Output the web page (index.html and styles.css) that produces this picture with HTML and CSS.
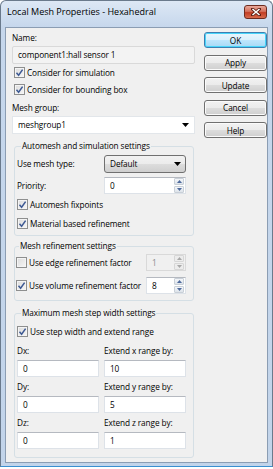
FILE: index.html
```html
<!DOCTYPE html>
<html lang="en">
<head>
    <meta charset="UTF-8">
    <title>Local Mesh Properties - Hexahedral</title>
    <link rel="stylesheet" href="styles.css">
</head>
<body>

<div class="window">
    <div class="titlebar">
        <span class="title">Local Mesh Properties - Hexahedral</span>
        <span class="close-btn">
            <svg width="10" height="8" viewBox="0 0 10 8"><path d="M1.5 1 L8.5 7 M8.5 1 L1.5 7" stroke="#5a1d12" stroke-width="3" stroke-linecap="square"/><path d="M1.5 1 L8.5 7 M8.5 1 L1.5 7" stroke="#fff" stroke-width="1.6"/></svg>
        </span>
    </div>

    <div class="client">
        <div class="main">
            <div class="label">Name:</div>
            <div class="textbox readonly">component1:hall sensor 1</div>

            <div class="check">
                <span class="box"><svg width="9" height="9" viewBox="0 0 9 9"><path d="M1.5 4.8 L3.6 7.2 L7.6 1.6" fill="none" stroke="#3d5993" stroke-width="1.5"/></svg></span>
                Consider for simulation
            </div>
            <div class="check">
                <span class="box"><svg width="9" height="9" viewBox="0 0 9 9"><path d="M1.5 4.8 L3.6 7.2 L7.6 1.6" fill="none" stroke="#3d5993" stroke-width="1.5"/></svg></span>
                Consider for bounding box
            </div>

            <div class="label label-gap">Mesh group:</div>
            <div class="combo">
                <span>meshgroup1</span>
                <svg width="7" height="4" viewBox="0 0 7 4"><path d="M0 0 H7 L3.5 4 Z" fill="#000"/></svg>
            </div>

            <fieldset class="group group-first">
                <legend>Automesh and simulation settings</legend>
                <div class="row">
                    <span>Use mesh type:</span>
                    <div class="dropdown">
                        <span>Default</span>
                        <svg width="7" height="4" viewBox="0 0 7 4"><path d="M0 0 H7 L3.5 4 Z" fill="#000"/></svg>
                    </div>
                </div>
                <div class="row row-gap">
                    <span>Priority:</span>
                    <div class="spin spin-wide">
                        <span class="spin-value">0</span>
                        <span class="spin-btns">
                            <span class="arrow"><svg width="5" height="3" viewBox="0 0 5 3"><path d="M0 3 H5 L2.5 0 Z" fill="#4e6a9c"/></svg></span>
                            <span class="arrow"><svg width="5" height="3" viewBox="0 0 5 3"><path d="M0 0 H5 L2.5 3 Z" fill="#4e6a9c"/></svg></span>
                        </span>
                    </div>
                </div>
                <div class="check check-in">
                    <span class="box"><svg width="9" height="9" viewBox="0 0 9 9"><path d="M1.5 4.8 L3.6 7.2 L7.6 1.6" fill="none" stroke="#3d5993" stroke-width="1.5"/></svg></span>
                    Automesh fixpoints
                </div>
                <div class="check check-in">
                    <span class="box"><svg width="9" height="9" viewBox="0 0 9 9"><path d="M1.5 4.8 L3.6 7.2 L7.6 1.6" fill="none" stroke="#3d5993" stroke-width="1.5"/></svg></span>
                    Material based refinement
                </div>
            </fieldset>

            <fieldset class="group group-refine">
                <legend>Mesh refinement settings</legend>
                <div class="row">
                    <div class="check">
                        <span class="box"></span>
                        Use edge refinement factor
                    </div>
                    <div class="spin spin-small disabled">
                        <span class="spin-value">1</span>
                        <span class="spin-btns">
                            <span class="arrow"><svg width="5" height="3" viewBox="0 0 5 3"><path d="M0 3 H5 L2.5 0 Z" fill="#a8a8a8"/></svg></span>
                            <span class="arrow"><svg width="5" height="3" viewBox="0 0 5 3"><path d="M0 0 H5 L2.5 3 Z" fill="#a8a8a8"/></svg></span>
                        </span>
                    </div>
                </div>
                <div class="row row-gap2">
                    <div class="check">
                        <span class="box"><svg width="9" height="9" viewBox="0 0 9 9"><path d="M1.5 4.8 L3.6 7.2 L7.6 1.6" fill="none" stroke="#3d5993" stroke-width="1.5"/></svg></span>
                        Use volume refinement factor
                    </div>
                    <div class="spin spin-small">
                        <span class="spin-value">8</span>
                        <span class="spin-btns">
                            <span class="arrow"><svg width="5" height="3" viewBox="0 0 5 3"><path d="M0 3 H5 L2.5 0 Z" fill="#4e6a9c"/></svg></span>
                            <span class="arrow"><svg width="5" height="3" viewBox="0 0 5 3"><path d="M0 0 H5 L2.5 3 Z" fill="#4e6a9c"/></svg></span>
                        </span>
                    </div>
                </div>
            </fieldset>

            <fieldset class="group group-step">
                <legend>Maximum mesh step width settings</legend>
                <div class="check check-in">
                    <span class="box"><svg width="9" height="9" viewBox="0 0 9 9"><path d="M1.5 4.8 L3.6 7.2 L7.6 1.6" fill="none" stroke="#3d5993" stroke-width="1.5"/></svg></span>
                    Use step width and extend range
                </div>
                <div class="pairs">
                    <span class="label">Dx:</span>
                    <span class="label">Extend x range by:</span>
                    <div class="textbox">0</div>
                    <div class="textbox">10</div>

                    <span class="label">Dy:</span>
                    <span class="label">Extend y range by:</span>
                    <div class="textbox">0</div>
                    <div class="textbox">5</div>

                    <span class="label">Dz:</span>
                    <span class="label">Extend z range by:</span>
                    <div class="textbox">0</div>
                    <div class="textbox">1</div>
                </div>
            </fieldset>
        </div>

        <div class="buttons">
            <button class="btn btn-default">OK</button>
            <button class="btn">Apply</button>
            <button class="btn">Update</button>
            <button class="btn">Cancel</button>
            <button class="btn">Help</button>
        </div>
    </div>
</div>

</body>
</html>
```

FILE: styles.css
```css
* {
    box-sizing: border-box;
}

body {
    margin: 0;
    background: #ffffff;
    color: #000;
    font-family: 'Open Sans', 'Noto Sans', sans-serif;
    font-size: 8.25px;
    line-height: 12px;
    letter-spacing: -0.1px;
}

.window {
    width: 273px;
    height: 467px;
    background: linear-gradient(#dde8f5, #c6d7ec 26px, #c2d4ea);
    border: 1px solid #6a7a8c;
    border-bottom-color: #3a8fd0;
    border-radius: 6px 6px 0 0;
    padding: 0 4px 3px;
    display: flex;
    flex-direction: column;
}

/* title bar */

.titlebar {
    height: 26px;
    display: flex;
    align-items: flex-start;
    justify-content: space-between;
    padding: 5px 1px 0 2px;
}

.title {
    font-size: 9px;
    line-height: 12px;
    letter-spacing: 0;
}

.close-btn {
    width: 23px;
    height: 14px;
    margin-top: -1px;
    display: flex;
    align-items: center;
    justify-content: center;
    border: 1px solid #6e2c20;
    border-radius: 3px;
    background: linear-gradient(#e9a99a, #d4705c 45%, #c23e25 55%, #d86a4c);
}

/* client area */

.client {
    flex: 1;
    background: #f0f0f0;
    border: 1px solid #8b9db3;
    display: flex;
    padding: 4px 0 0 6px;
}

.main {
    width: 183px;
}

.buttons {
    width: 63px;
    margin-left: 9px;
    display: flex;
    flex-direction: column;
    gap: 6.5px;
}

.label {
    display: block;
    height: 12px;
    white-space: nowrap;
}

.label-gap {
    margin-top: 4px;
}

.textbox {
    height: 18px;
    margin-top: 2px;
    padding: 0 0 0 5px;
    background: #fff;
    border: 1px solid #dde2e8;
    border-top-color: #b5b9c0;
    display: flex;
    align-items: center;
}

.textbox.readonly {
    background: #f3f3f3;
    border: 1px solid #d9d9d9;
    border-radius: 2px;
}

/* check boxes */

.check {
    height: 17px;
    display: flex;
    align-items: center;
    padding-left: 2px;
    white-space: nowrap;
    flex-shrink: 0;
}

.check-in {
    padding-left: 0;
    margin-top: 2px;
}

.box {
    width: 11px;
    height: 11px;
    margin-right: 2px;
    border: 1px solid #8e8f8f;
    background: linear-gradient(135deg, #dcdcdc, #f6f6f6);
    box-shadow: inset 0 0 0 1px #f4f4f4;
    display: flex;
    align-items: center;
    justify-content: center;
}

/* combos */

.combo {
    height: 18px;
    margin-top: 2px;
    padding: 0 5px;
    background: #fff;
    border: 1px solid #e2e6ea;
    display: flex;
    align-items: center;
    justify-content: space-between;
}

.dropdown {
    width: 82px;
    height: 18px;
    padding: 0 4px 0 5px;
    border: 1px solid #707070;
    border-radius: 3px;
    background: linear-gradient(#f2f2f2, #ebebeb 50%, #dddddd 50%, #cfcfcf);
    display: flex;
    align-items: center;
    justify-content: space-between;
}

/* group boxes */

.group {
    margin: 6px 1px 0 2px;
    padding: 3px 7px 3px 2px;
    border: 1px solid #d5dfe5;
    border-radius: 3px;
}

.group legend {
    padding: 0 1px;
    margin-left: 4px;
    line-height: 12px;
}

.group-refine {
    margin-top: 4px;
    padding: 2px 7px 6px 0;
}

.group-refine .check {
    padding-left: 1px;
}

.group-step {
    margin-top: 6px;
    padding: 2px 7px 6px 2px;
}

.row {
    display: flex;
    align-items: center;
    justify-content: space-between;
    height: 18px;
}

.group-refine .row {
    height: 17px;
}

.row-gap {
    margin-top: 4px;
    height: 17px;
}

.row-gap2 {
    margin-top: 6px;
}

/* spin boxes */

.spin {
    height: 17px;
    background: #fff;
    border: 1px solid #dde2e8;
    border-top-color: #b5b9c0;
    display: flex;
    align-items: center;
    justify-content: space-between;
    padding-left: 5px;
    flex-shrink: 0;
}

.spin-wide {
    width: 82px;
}

.spin-small {
    width: 40px;
}

.spin-btns {
    width: 10px;
    height: 15px;
    display: flex;
    flex-direction: column;
    gap: 1px;
    margin-right: 1px;
}

.arrow {
    flex: 1;
    display: flex;
    align-items: center;
    justify-content: center;
    background: linear-gradient(#f4f6f9, #dde3ea);
    border: 1px solid #c9d0d8;
    border-radius: 1px;
}

.spin.disabled {
    background: #f0f0f0;
    border-color: #d9d9d9;
    color: #8a8a8a;
}

.spin.disabled .arrow {
    background: #ececec;
    border-color: #d6d6d6;
}

/* x/y/z grid */

.pairs {
    display: grid;
    grid-template-columns: 82px 82px;
    column-gap: 5px;
    margin-top: 3px;
}

.pairs .label {
    margin-top: 2px;
}

.pairs .textbox {
    height: 17px;
    margin: 3px 0 2px;
}

/* buttons */

.btn {
    height: 16px;
    padding: 0;
    font-family: inherit;
    font-size: 8.25px;
    letter-spacing: inherit;
    color: #000;
    border: 1px solid #707070;
    border-radius: 3px;
    background: linear-gradient(#f2f2f2, #ebebeb 50%, #dddddd 50%, #cfcfcf);
    box-shadow: inset 0 0 0 1px #fbfbfb;
}

.btn-default {
    border-color: #3c7fb1;
    box-shadow: inset 0 0 0 1px #48d5fa;
    background: linear-gradient(#eaf6fd, #d9f0fc 50%, #bee6fd 50%, #a7d9f5);
}
```
